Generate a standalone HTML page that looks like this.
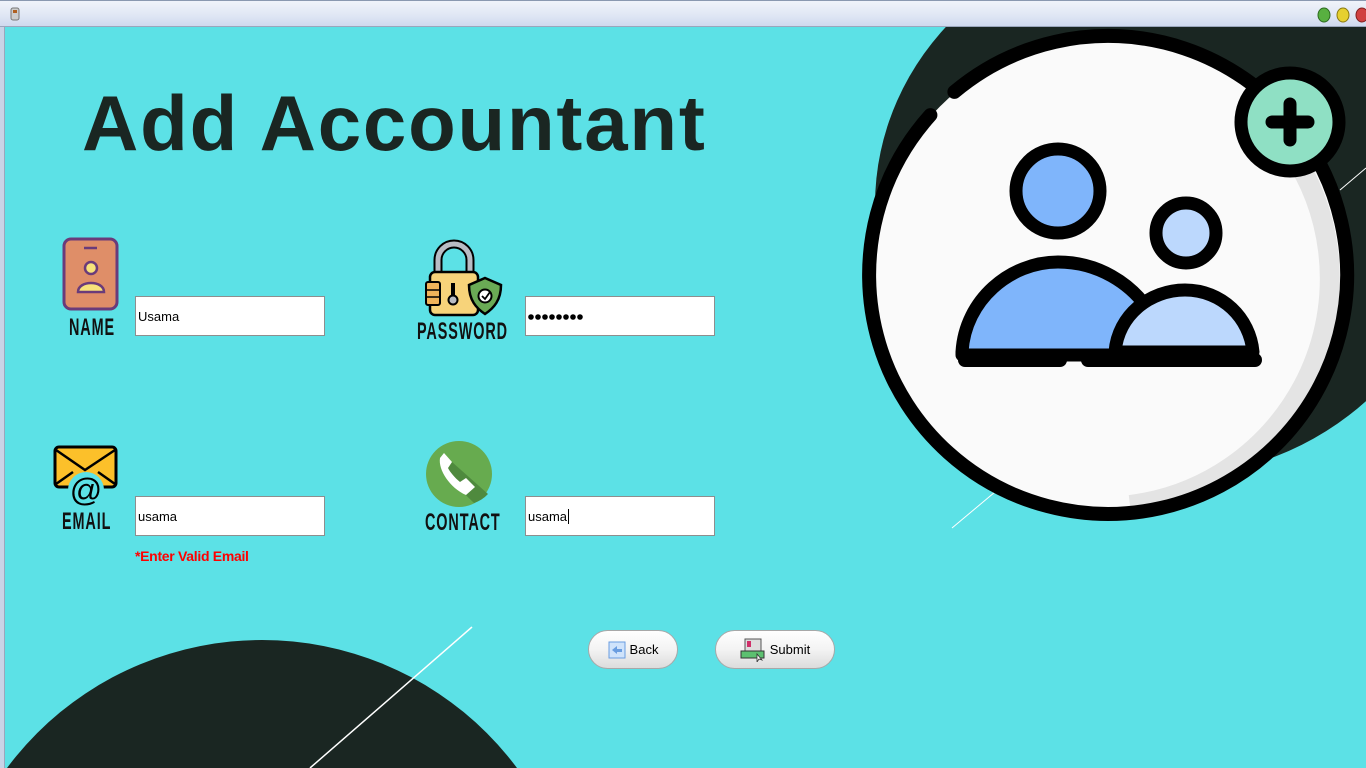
<!DOCTYPE html>
<html><head><meta charset="utf-8"><style>
*{margin:0;padding:0;box-sizing:border-box}
html,body{width:1366px;height:768px;overflow:hidden}
body{position:relative;background:#5ce1e6;font-family:"Liberation Sans",sans-serif}
svg{display:block}
.tb{position:absolute;left:0;top:0;width:1366px;height:27px;background:linear-gradient(#f0f3fa,#dfe6f4 60%,#cfd9ee);border-top:1px solid #8a98b0;border-bottom:1px solid #9aa6bc}
.lb{position:absolute;left:0;top:27px;width:5px;height:741px;background:#c9d3e6;border-right:1px solid #9aa6bc}
.title{position:absolute;left:82px;top:78px;font-size:78px;font-weight:bold;color:#1a2622;letter-spacing:1.8px;white-space:nowrap}
.lab{position:absolute;font-family:"Liberation Sans Narrow","Liberation Sans",sans-serif;font-weight:bold;font-size:24px;line-height:28px;color:#111;transform:scaleX(0.6);transform-origin:left top;letter-spacing:1.5px;white-space:nowrap}
.in{position:absolute;width:190px;height:40px;background:#fff;border:1px solid #8e8e8e;font-size:13px;line-height:16px;padding:12px 0 0 2px;color:#000;overflow:hidden}
.err{position:absolute;left:135px;top:548px;color:#f00;font-weight:bold;font-size:14px;letter-spacing:-0.3px}
.btn{position:absolute;top:630px;height:39px;border:1px solid #a8a8a8;border-radius:20px;background:linear-gradient(#fff,#f3f3f3 50%,#dcdcdc);font-size:13px;color:#000;display:flex;align-items:center;justify-content:center;gap:4px}
</style></head><body>
<svg style="position:absolute;left:0;top:0" width="1366" height="768">
<ellipse cx="1165" cy="205" rx="290" ry="272" fill="#1a2622"/>
<circle cx="262" cy="958" r="318" fill="#1a2622"/>
<line x1="472" y1="627" x2="310" y2="768" stroke="#fff" stroke-width="1.5"/>
<line x1="1366" y1="168" x2="1340" y2="190" stroke="#fff" stroke-width="1"/>
<line x1="995" y1="492" x2="952" y2="528" stroke="#fff" stroke-width="1"/>
<circle cx="1108" cy="275" r="238" fill="#fafafa"/>
<path d="M1290 150 A228 228 0 0 1 1130 505" stroke="#e4e4e4" stroke-width="20" fill="none"/>
<path d="M954.4 91.9 A239 239 0 1 1 930.4 115.1" fill="none" stroke="#000" stroke-width="14" stroke-linecap="round"/>
<circle cx="1058" cy="191" r="42" fill="#7fb5fb" stroke="#000" stroke-width="13"/>
<circle cx="1186" cy="233" r="30" fill="#bcd8fd" stroke="#000" stroke-width="13"/>
<path d="M962 352 C965 300 1010 262 1058 262 C1100 262 1130 285 1145 305 L1120 355 L962 355 Z" fill="#7fb5fb" stroke="#000" stroke-width="13" stroke-linejoin="round"/>
<path d="M1115 352 C1118 315 1150 290 1185 290 C1222 290 1250 318 1253 352 Z" fill="#bcd8fd" stroke="#000" stroke-width="13" stroke-linejoin="round"/>
<line x1="965" y1="360" x2="1060" y2="360" stroke="#000" stroke-width="14" stroke-linecap="round"/>
<line x1="1088" y1="360" x2="1255" y2="360" stroke="#000" stroke-width="14" stroke-linecap="round"/>
<circle cx="1290" cy="122" r="49" fill="#8fe0c4" stroke="#000" stroke-width="13"/>
<path d="M1272 122 H1308 M1290 104 V140" stroke="#000" stroke-width="13" stroke-linecap="round"/>
<!-- name icon -->
<rect x="64" y="239" width="53" height="70" rx="7" fill="#df8e68" stroke="#6a3b7a" stroke-width="3"/>
<line x1="84" y1="248" x2="97" y2="248" stroke="#6a3b7a" stroke-width="2.5"/>
<circle cx="91" cy="268" r="6" fill="#f7e37a" stroke="#6a3b7a" stroke-width="2.5"/>
<path d="M78 292 C78 280 104 280 104 292 Z" fill="#f7e37a" stroke="#6a3b7a" stroke-width="2.5"/>
<!-- lock icon -->
<path d="M438 276 V260 A16 16 0 0 1 470 260 V276" fill="none" stroke="#000" stroke-width="9"/>
<path d="M438 276 V260 A16 16 0 0 1 470 260 V276" fill="none" stroke="#b8bcc4" stroke-width="5"/>
<rect x="430" y="272" width="48" height="43" rx="5" fill="#f7d37a" stroke="#000" stroke-width="2.5"/>
<rect x="426" y="282" width="14" height="23" rx="2" fill="#f0b45a" stroke="#000" stroke-width="2"/>
<path d="M427 290 H440 M427 297 H440" stroke="#000" stroke-width="1.5"/>
<line x1="453" y1="283" x2="453" y2="297" stroke="#000" stroke-width="4"/><circle cx="453" cy="300" r="4.5" fill="#b8bcc4" stroke="#000" stroke-width="2"/>
<path d="M485 278 L501 285 C501 300 494 308 485 314 C476 308 469 300 469 285 Z" fill="#6aaa55" stroke="#000" stroke-width="2.5"/>
<circle cx="485" cy="296" r="6.5" fill="#fff" stroke="#000" stroke-width="2"/>
<path d="M482 296 L485 299 L490 292" fill="none" stroke="#000" stroke-width="1.8"/>
<!-- email icon -->
<rect x="55" y="447" width="61" height="40" rx="4" fill="#fcc02a" stroke="#000" stroke-width="3"/>
<path d="M56 450 L85 470 L115 450 M56 484 L73 472 M115 484 L98 472" fill="none" stroke="#000" stroke-width="2.5"/>
<circle cx="86" cy="490" r="18" fill="#5ce1e6"/>
<text x="86" y="501" text-anchor="middle" font-family="Liberation Sans" font-size="32" fill="#000">@</text>
<!-- phone icon -->
<circle cx="459" cy="474" r="33" fill="#67ab4f"/>
<path d="M452 462 L488 494 A33 33 0 0 1 474 503 L444 474 Z" fill="#4f8a3e"/>
<path d="M440 458 C438 470 450 488 466 495 L475 487 L466 478 L460 482 C455 478 450 472 448 468 L452 462 L444 453 Z" fill="#fff"/>
</svg>
<div class="tb"><svg style="position:absolute;left:8px;top:6px" width="14" height="14"><rect x="3" y="1" width="8" height="12" rx="2" fill="#ccc" stroke="#777"/><rect x="5" y="3" width="4" height="3" fill="#b06020"/></svg>
<svg style="position:absolute;left:1316px;top:6px" width="50" height="16"><ellipse cx="8" cy="8" rx="6" ry="7" fill="#58b040" stroke="#2d6a20"/><ellipse cx="27" cy="8" rx="6" ry="7" fill="#e6d030" stroke="#8a7a10"/><ellipse cx="46" cy="8" rx="6" ry="7" fill="#d04040" stroke="#802020"/></svg></div>
<div class="lb"></div>
<div class="title">Add Accountant</div>
<div class="lab" style="left:69px;top:314px">NAME</div>
<div class="lab" style="left:417px;top:318px">PASSWORD</div>
<div class="lab" style="left:62px;top:508px">EMAIL</div>
<div class="lab" style="left:425px;top:509px">CONTACT</div>
<div class="in" style="left:135px;top:296px">Usama</div>
<div class="in" style="left:525px;top:296px;padding:0"><svg width="70" height="38"><g fill="#000"><circle cx="5" cy="20" r="2.8"/><circle cx="12" cy="20" r="2.8"/><circle cx="19" cy="20" r="2.8"/><circle cx="26" cy="20" r="2.8"/><circle cx="33" cy="20" r="2.8"/><circle cx="40" cy="20" r="2.8"/><circle cx="47" cy="20" r="2.8"/><circle cx="54" cy="20" r="2.8"/></g></svg></div>
<div class="in" style="left:135px;top:496px">usama</div>
<div class="in" style="left:525px;top:496px">usama<span style="border-left:1px solid #000;margin-left:1px"></span></div>
<div class="err">*Enter Valid Email</div>
<div class="btn" style="left:588px;width:90px"><svg width="18" height="18"><rect x="1" y="1" width="16" height="16" fill="#cfe3fb" stroke="#6a9de0"/><path d="M4 9 L9 5 V8 H14 V11 H9 V13 Z" fill="#6a9de0"/></svg>Back</div>
<div class="btn" style="left:715px;width:120px"><svg width="26" height="24"><rect x="5" y="1" width="16" height="14" fill="#ddd" stroke="#555"/><rect x="7" y="3" width="4" height="6" fill="#d0306a"/><rect x="1" y="13" width="23" height="7" fill="#5cc070" stroke="#333"/><path d="M17 16 L17 24 L19 21 L22 22 Z" fill="#fff" stroke="#333" stroke-width=".8"/></svg>Submit</div>
</body></html>
